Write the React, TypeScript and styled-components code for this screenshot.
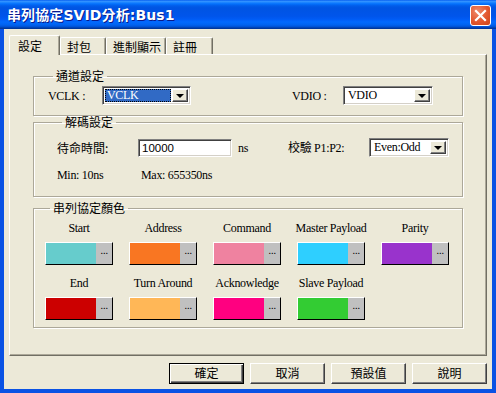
import React from "react";
import styled, { createGlobalStyle } from "styled-components";

const Global = createGlobalStyle`
  html, body { margin: 0; padding: 0; overflow: hidden; background: #fff; }
  * { box-sizing: border-box; }
`;

const CJK = `"Noto Sans CJK TC", "Noto Sans CJK SC", sans-serif`;
const SERIF = `"Liberation Serif", "Noto Sans CJK TC", serif`;

const Window = styled.div`
  width: 496px;
  height: 393px;
  display: flex;
  flex-direction: column;
  background: #0a52e4;
`;

const TitleBar = styled.div`
  height: 29px;
  flex: none;
  display: flex;
  align-items: flex-start;
  justify-content: space-between;
  padding: 0 5px 0 7px;
  background: linear-gradient(
    to bottom,
    #0058ee 0%,
    #3593ff 4%,
    #288eff 7%,
    #127dff 10%,
    #036ffc 14%,
    #0262ee 18%,
    #0057e5 24%,
    #0054e3 30%,
    #0055eb 56%,
    #005bf5 66%,
    #026afe 76%,
    #0062ef 86%,
    #0052d6 92%,
    #0040ab 96%,
    #003092 100%
  );
`;

const Title = styled.div`
  margin-top: 6px;
  color: #fff;
  font-family: "DejaVu Sans", ${CJK};
  font-weight: bold;
  font-size: 14px;
  line-height: 18px;
  letter-spacing: 0.1px;
  text-shadow: 1px 1px 0 #0a1a8a;
`;

const CloseButton = styled.div`
  margin-top: 5px;
  width: 21px;
  height: 21px;
  border: 1px solid #fff;
  border-radius: 3px;
  background: radial-gradient(circle at 35% 30%, #ef8a6c 0%, #e2572f 55%, #cc4418 100%);
  display: flex;
  align-items: center;
  justify-content: center;
`;

const Client = styled.div`
  flex: 1;
  margin: 0 4px 4px 4px;
  background: #ece9d8;
  padding: 6px 5px 0 5px;
  display: flex;
  flex-direction: column;
`;

const TabRow = styled.div`
  display: flex;
  align-items: flex-end;
  height: 20px;
  margin-bottom: -1px;
  position: relative;
  z-index: 1;
`;

const Tab = styled.div<{ $active?: boolean; $w: number }>`
  width: ${(p) => p.$w}px;
  height: ${(p) => (p.$active ? 20 : 17)}px;
  margin-bottom: ${(p) => (p.$active ? 0 : 1)}px;
  padding-left: ${(p) => (p.$active ? 8 : 6)}px;
  padding-top: ${(p) => (p.$active ? 2 : 1)}px;
  background: #ece9d8;
  border-top: 1px solid #fff;
  border-left: 1px solid #fff;
  border-right: 1px solid #716f64;
  border-radius: 2px 2px 0 0;
  box-shadow: inset -1px 0 0 #aca899;
  font-family: ${CJK};
  font-size: 12px;
  line-height: 15px;
  color: #000;
  white-space: nowrap;
`;

const Panel = styled.div`
  height: 302px;
  flex: none;
  background: #ece9d8;
  border-top: 1px solid #fff;
  border-left: 1px solid #fff;
  border-right: 1px solid #716f64;
  border-bottom: 1px solid #716f64;
  box-shadow: inset -1px -1px 0 #aca899;
  padding: 15px 23px 0 23px;
  display: flex;
  flex-direction: column;
`;

const Group = styled.fieldset<{ $gapTop?: number; $pt: number; $pb: number; $pl: number }>`
  margin: ${(p) => p.$gapTop ?? 0}px 0 0 0;
  padding: ${(p) => p.$pt}px 0 ${(p) => p.$pb}px ${(p) => p.$pl}px;
  border: 1px solid #aca899;
  box-shadow: inset 1px 1px 0 #fff, 1px 1px 0 #fff;
  min-width: 0;
`;

const Legend = styled.legend`
  margin-left: 5px;
  padding: 0 3px;
  font-family: ${CJK};
  font-size: 12px;
  line-height: 12px;
  color: #000;
`;

const Row = styled.div<{ $mt?: number; $h: number }>`
  display: flex;
  align-items: center;
  height: ${(p) => p.$h}px;
  margin-top: ${(p) => p.$mt ?? 0}px;
`;

const Label = styled.div<{ $w?: number; $cjk?: boolean }>`
  width: ${(p) => (p.$w ? `${p.$w}px` : "auto")};
  flex: none;
  font-family: ${(p) => (p.$cjk ? CJK : SERIF)};
  font-size: 12px;
  line-height: 14px;
  letter-spacing: ${(p) => (p.$cjk ? 0 : -0.3)}px;
  color: #000;
  white-space: nowrap;
`;

const Gap = styled.div<{ $w: number }>`
  width: ${(p) => p.$w}px;
  flex: none;
`;

const Sunken = styled.div<{ $w: number; $h: number }>`
  width: ${(p) => p.$w}px;
  height: ${(p) => p.$h}px;
  flex: none;
  background: #fff;
  border: 1px solid;
  border-color: #808080 #fff #fff #808080;
  box-shadow: inset 1px 1px 0 #404040, inset -1px -1px 0 #d4d0c8;
  padding: 2px;
  display: flex;
  align-items: stretch;
`;

const ComboText = styled.div<{ $selected?: boolean }>`
  flex: 1;
  margin-right: 1px;
  padding-left: 2px;
  font-family: ${SERIF};
  font-size: 12px;
  line-height: 13px;
  letter-spacing: -0.3px;
  color: ${(p) => (p.$selected ? "#fff" : "#000")};
  background: ${(p) => (p.$selected ? "#316ac5" : "transparent")};
  outline: ${(p) => (p.$selected ? "1px dotted #000" : "none")};
  outline-offset: -1px;
  display: flex;
  align-items: center;
`;

const DropButton = styled.div`
  width: 16px;
  flex: none;
  background: #ece9d8;
  border: 1px solid;
  border-color: #fff #404040 #404040 #fff;
  box-shadow: inset -1px -1px 0 #808080;
  display: flex;
  align-items: center;
  justify-content: center;
`;

const Arrow = styled.div`
  width: 0;
  height: 0;
  border-left: 4px solid transparent;
  border-right: 4px solid transparent;
  border-top: 4px solid #000;
`;

const InputText = styled.div`
  font-family: "Liberation Sans", Arial, sans-serif;
  font-size: 11.5px;
  line-height: 12px;
  color: #000;
  padding-left: 1px;
  display: flex;
  align-items: center;
`;

const ColorGrid = styled.div`
  display: grid;
  grid-template-columns: repeat(5, 68px);
  column-gap: 16px;
  row-gap: 11px;
`;

const ColorCell = styled.div`
  display: flex;
  flex-direction: column;
  align-items: center;
  gap: 7px;
`;

const Swatch = styled.div`
  width: 68px;
  height: 23px;
  display: flex;
  border: 1px solid;
  border-color: #fff #000 #000 #fff;
`;

const SwatchFill = styled.div<{ $color: string }>`
  flex: 1;
  background: ${(p) => p.$color};
`;

const SwatchDots = styled.div`
  width: 16px;
  background: #c0c0c0;
  font-family: "Liberation Sans", Arial, sans-serif;
  font-size: 11px;
  line-height: 14px;
  color: #000;
  text-align: center;
  letter-spacing: -0.5px;
`;

const ButtonRow = styled.div`
  display: flex;
  justify-content: flex-end;
  gap: 6px;
  margin-top: 7px;
`;

const Button = styled.div<{ $default?: boolean }>`
  width: 75px;
  height: 21px;
  background: #ece9d8;
  border: 1px solid;
  border-color: ${(p) => (p.$default ? "#000" : "#fff #404040 #404040 #fff")};
  box-shadow: ${(p) =>
    p.$default
      ? "inset 1px 1px 0 #fff, inset -1px -1px 0 #404040, inset -2px -2px 0 #808080"
      : "inset -1px -1px 0 #808080"};
  font-family: ${CJK};
  font-size: 12px;
  line-height: 18px;
  color: #000;
  text-align: center;
`;

const colors1 = [
  { name: "Start", color: "#66cccc" },
  { name: "Address", color: "#f97622" },
  { name: "Command", color: "#ef82a0" },
  { name: "Master Payload", color: "#2ecfff" },
  { name: "Parity", color: "#9933cc" },
  { name: "End", color: "#cc0000" },
  { name: "Turn Around", color: "#ffb757" },
  { name: "Acknowledge", color: "#ff0080" },
  { name: "Slave Payload", color: "#33cc33" },
];

const Combo = ({ w, text, selected }: { w: number; text: string; selected?: boolean }) => (
  <Sunken $w={w} $h={19}>
    <ComboText $selected={selected}>{text}</ComboText>
    <DropButton>
      <Arrow />
    </DropButton>
  </Sunken>
);

export default function App() {
  return (
    <>
      <Global />
      <Window>
        <TitleBar>
          <Title>串列協定SVID分析:Bus1</Title>
          <CloseButton>
            <svg width="13" height="13" viewBox="0 0 13 13">
              <path d="M2 2 L11 11 M11 2 L2 11" stroke="#fff" strokeWidth="2.2" strokeLinecap="square" />
            </svg>
          </CloseButton>
        </TitleBar>
        <Client>
          <TabRow>
            <Tab $active $w={51}>設定</Tab>
            <Tab $w={46}>封包</Tab>
            <Tab $w={60}>進制顯示</Tab>
            <Tab $w={47}>註冊</Tab>
          </TabRow>
          <Panel>
            <Group $pt={4} $pb={10} $pl={14}>
              <Legend>通道設定</Legend>
              <Row $h={19}>
                <Label $w={54}>VCLK :</Label>
                <Combo w={89} text="VCLK" selected />
                <Gap $w={101} />
                <Label $w={51}>VDIO :</Label>
                <Combo w={90} text="VDIO" />
              </Row>
            </Group>
            <Group $pt={10} $pb={14} $pl={23}>
              <Legend>解碼設定</Legend>
              <Row $h={19}>
                <Label $w={81} $cjk>待命時間:</Label>
                <Sunken $w={94} $h={18}>
                  <InputText>10000</InputText>
                </Sunken>
                <Gap $w={6} />
                <Label $w={50}>ns</Label>
                <Label $w={81}>校驗 P1:P2:</Label>
                <Combo w={80} text="Even:Odd" />
              </Row>
              <Row $h={14} $mt={11}>
                <Label $w={84}>Min: 10ns</Label>
                <Label>Max: 655350ns</Label>
              </Row>
            </Group>
            <Group $gapTop={5} $pt={7} $pb={7} $pl={11}>
              <Legend>串列協定顏色</Legend>
              <ColorGrid>
                {colors1.map((c) => (
                  <ColorCell key={c.name}>
                    <Label>{c.name}</Label>
                    <Swatch>
                      <SwatchFill $color={c.color} />
                      <SwatchDots>...</SwatchDots>
                    </Swatch>
                  </ColorCell>
                ))}
              </ColorGrid>
            </Group>
          </Panel>
          <ButtonRow>
            <Button $default>確定</Button>
            <Button>取消</Button>
            <Button>預設值</Button>
            <Button>說明</Button>
          </ButtonRow>
        </Client>
      </Window>
    </>
  );
}
